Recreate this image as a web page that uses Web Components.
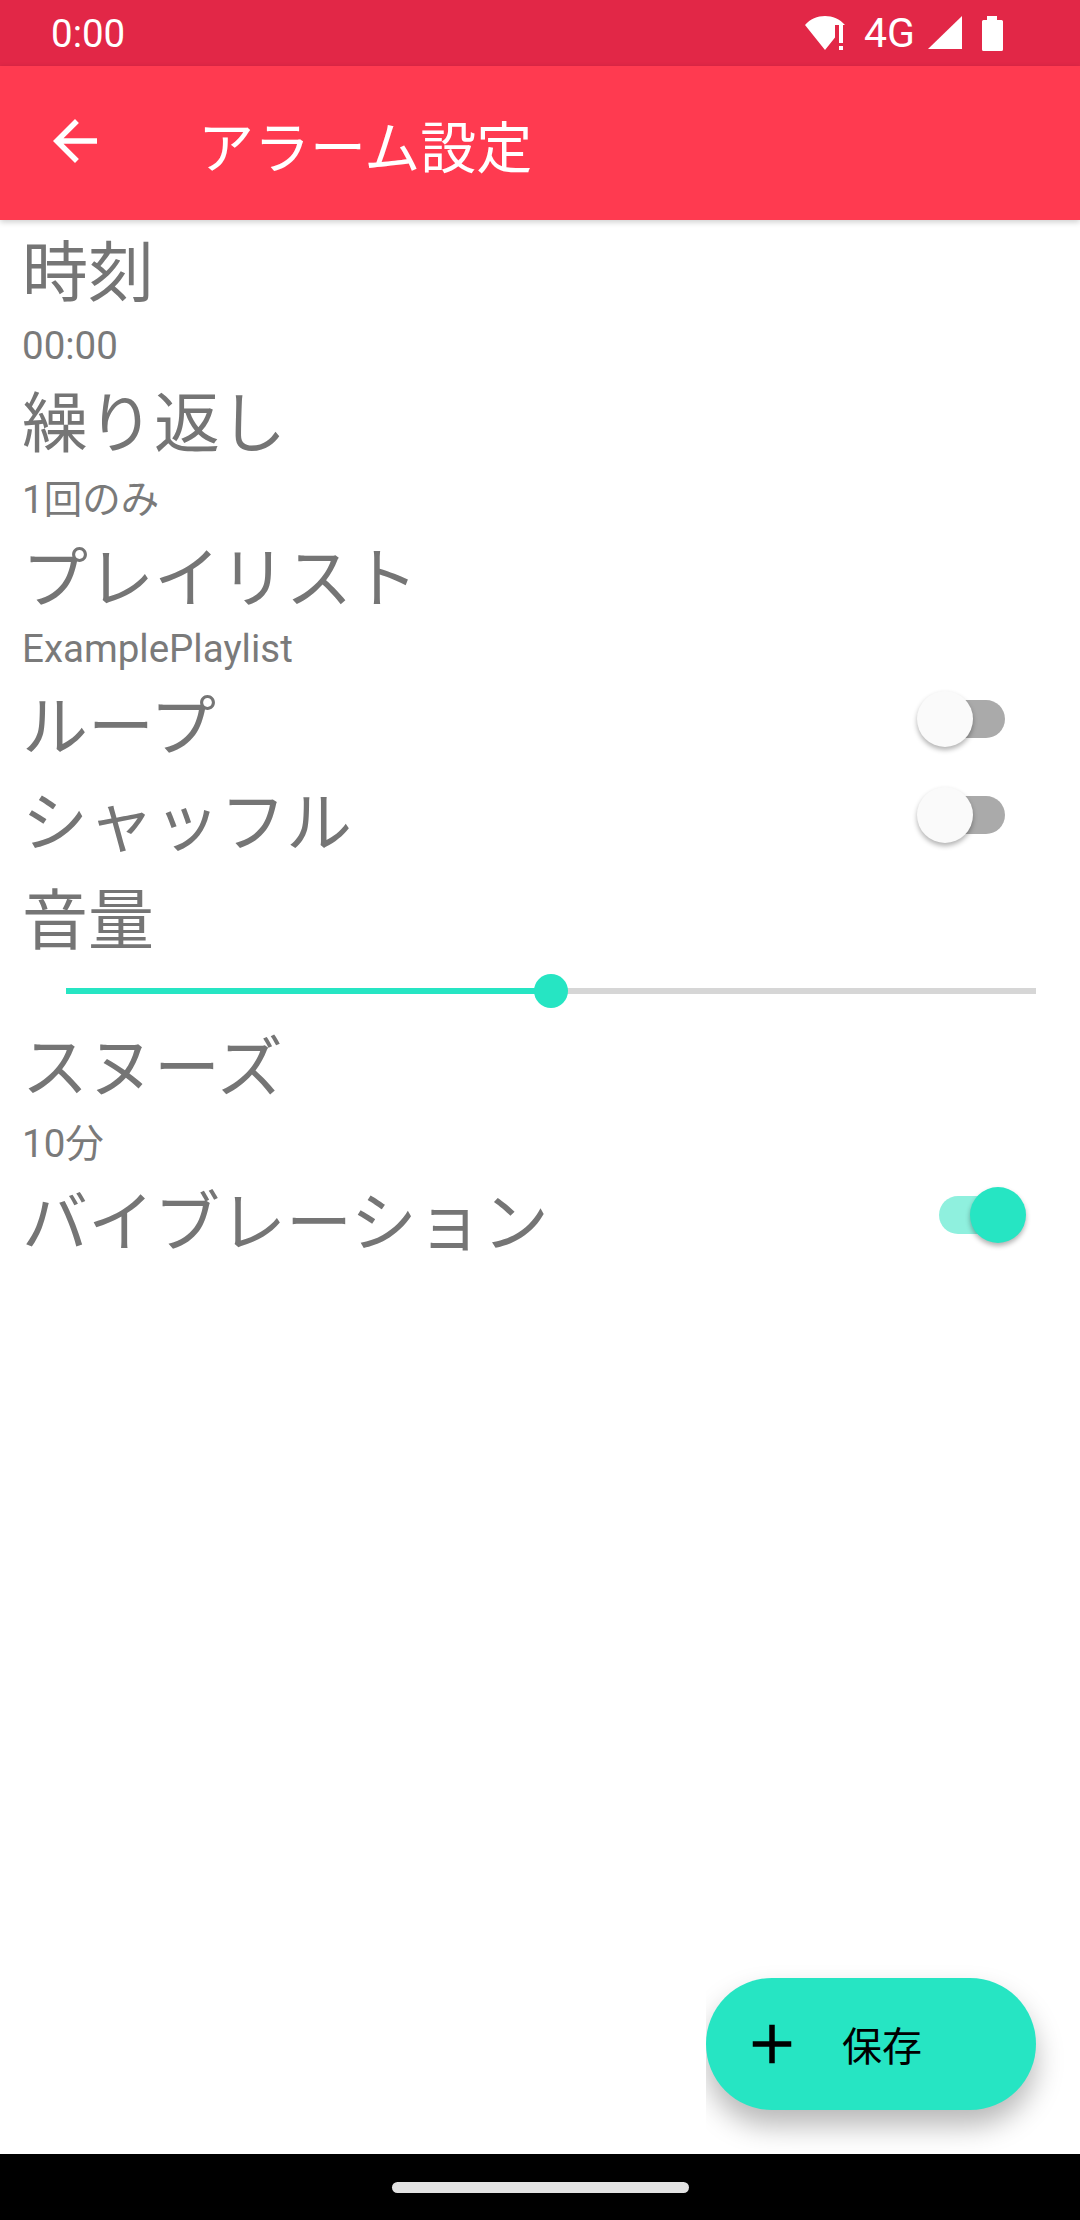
<!DOCTYPE html>
<html lang="ja">
<head>
<meta charset="utf-8">
<title>アラーム設定</title>
<style>
	html, body {
		margin: 0;
		background: #fff;
	}
</style>
</head>
<body>
<alarm-screen>
	<setting-row sub="00:00" style="--shift: 6px">時刻</setting-row>
	<setting-row sub="1回のみ" tall>繰り返し</setting-row>
	<setting-row sub="ExamplePlaylist">プレイリスト</setting-row>
	<setting-row><span>ループ</span><toggle-switch slot="end"></toggle-switch></setting-row>
	<setting-row><span>シャッフル</span><toggle-switch slot="end"></toggle-switch></setting-row>
	<setting-row style="--shift: 5px; margin-top: 6px">音量</setting-row>
	<volume-slider value="50"></volume-slider>
	<setting-row sub="10分" tall>スヌーズ</setting-row>
	<setting-row><span>バイブレーション</span><toggle-switch slot="end" checked></toggle-switch></setting-row>
</alarm-screen>

<script>
'use strict';

const sans = `Roboto, "Noto Sans CJK JP", sans-serif`;

// small helper so every element gets its own open shadow root
function define(name, html, extra) {
	class El extends HTMLElement {
		constructor() {
			super();
			this.attachShadow({mode: 'open'}).innerHTML = html;
			if (extra) extra(this);
		}
	}
	customElements.define(name, El);
}

// top bar with clock and the system icons

define('status-bar', `
	<style>
		:host {
			display: flex;
			align-items: center;
			box-sizing: border-box;
			height: 66px;
			padding: 0 77px 0 51px;
			background: #e22747;
			color: #fff;
			font: 400 38.5px ${sans};
		}
		.time { margin-right: auto; }
		svg { display: block; fill: #fff; }
		.net { margin: 0 13px 0 19px; font-size: 41px; }
	</style>
	<span class="time">0:00</span>
	<svg width="40" height="35" viewBox="0 0 40 35">
		<path d="M0 9C10-3 30-3 40 9H30V21.5L20 34Z"/>
		<rect x="34" y="9" width="4" height="18"/>
		<rect x="34" y="30" width="4" height="4"/>
	</svg>
	<span class="net">4G</span>
	<svg width="34" height="34" viewBox="0 0 34 34" style="margin-right:20px"><path d="M0 33L34 0V33Z"/></svg>
	<svg width="21" height="35" viewBox="0 0 21 35">
		<path d="M5 4V0H15V4H19.5Q21 4 21 5.500V33.500Q21 35 19.500 35H1.500Q0 35 0 33.500V5.500Q0 4 1.500 4Z"/>
	</svg>
`);

// toolbar with back arrow and screen title

define('app-bar', `
	<style>
		:host {
			display: flex;
			align-items: center;
			box-sizing: border-box;
			height: 154px;
			padding-left: 42px;
			background: #ff3a50;
			color: #fff;
			font: 400 56px ${sans};
			box-shadow: 0 2px 6px rgba(0, 0, 0, .2);
			position: relative;
			z-index: 1;
		}
		svg { display: block; margin: -4px 90px 0 0; fill: #fff; }
		span { margin-top: 1px; }
	</style>
	<svg width="66" height="66" viewBox="0 0 24 24">
		<path d="M20 11H7.830l5.590-5.590L12 4l-8 8 8 8 1.410-1.410L7.830 13H20v-2z"/>
	</svg>
	<span><slot></slot></span>
`);

// one settings row: big title, optional small value under it, optional control on the right
// "tall" rows hold a value with kanji/kana in it, those lines come out a bit higher

define('setting-row', `
	<style>
		:host {
			display: block;
			color: #757575;
			font-family: ${sans};
		}
		.head {
			display: flex;
			align-items: center;
			justify-content: space-between;
			height: 96px;
			padding: 0 54px 0 22px;
			font-size: 66px;
		}
		.title { position: relative; top: var(--shift, 9px); line-height: 1; white-space: nowrap; }
		.sub {
			box-sizing: border-box;
			height: 52px;
			padding: 7px 0 0 22px;
			color: #7a7a7a;
			font-size: 38.5px;
			line-height: 45px;
		}
		:host([tall]) .sub {
			height: 59px;
			padding-top: 13px;
		}
		.sub:empty { display: none; }
	</style>
	<div class="head">
		<span class="title"><slot></slot></span>
		<slot name="end"></slot>
	</div>
	<div class="sub"></div>
`, el => {
	el.shadowRoot.querySelector('.sub').textContent = el.getAttribute('sub') || '';
});

define('toggle-switch', `
	<style>
		:host {
			display: block;
			position: relative;
			width: 109px;
			height: 56px;
		}
		.track {
			position: absolute;
			left: 22px;
			top: 9px;
			width: 66px;
			height: 38px;
			border-radius: 19px;
			background: #aaa;
		}
		.thumb {
			position: absolute;
			left: 0;
			top: 0;
			width: 56px;
			height: 56px;
			border-radius: 50%;
			background: #fafafa;
			box-shadow: 0 3px 5px rgba(0, 0, 0, .3);
		}
		:host([checked]) .track { background: #8ff0de; }
		:host([checked]) .thumb { left: 53px; background: #26e5c3; }
	</style>
	<div class="track"></div>
	<div class="thumb"></div>
`);

define('volume-slider', `
	<style>
		:host {
			display: block;
			box-sizing: border-box;
			height: 47px;
			padding: 9px 44px 4px 66px;
		}
		.track {
			position: relative;
			height: 34px;
			background: linear-gradient(#d6d6d6, #d6d6d6) center / 100% 6px no-repeat;
		}
		.fill {
			height: 6px;
			position: absolute;
			top: 14px;
			left: 0;
			background: #26e5c3;
		}
		.thumb {
			position: absolute;
			top: 0;
			width: 34px;
			height: 34px;
			margin-left: -17px;
			border-radius: 50%;
			background: #26e5c3;
		}
	</style>
	<div class="track"><div class="fill"></div><div class="thumb"></div></div>
`, el => {
	const pos = el.getAttribute('value') + '%';
	el.shadowRoot.querySelector('.fill').style.width = pos;
	el.shadowRoot.querySelector('.thumb').style.left = pos;
});

// extended FAB, the shadow is cut off on its left side in the original too

define('save-fab', `
	<style>
		:host {
			display: block;
			position: absolute;
			right: 44px;
			bottom: 44px;
			clip-path: inset(-60px -60px -60px 0);
		}
		.fab {
			display: flex;
			align-items: center;
			box-sizing: border-box;
			width: 330px;
			height: 132px;
			padding-left: 33px;
			border-radius: 66px;
			background: #26e5c3;
			color: #000;
			font: 400 40px ${sans};
			box-shadow: 0 16px 28px rgba(0, 0, 0, .28);
		}
		svg { display: block; margin-right: 37px; }
	</style>
	<div class="fab">
		<svg width="66" height="66" viewBox="0 0 24 24"><path d="M19 13h-6v6h-2v-6H5v-2h6V5h2v6h6v2z"/></svg>
		<span><slot></slot></span>
	</div>
`);

define('nav-bar', `
	<style>
		:host {
			display: flex;
			align-items: center;
			justify-content: center;
			height: 66px;
			background: #000;
			position: relative;
			z-index: 1;
		}
		div {
			width: 297px;
			height: 11px;
			border-radius: 6px;
			background: #e2e2e2;
		}
	</style>
	<div></div>
`);

define('alarm-screen', `
	<style>
		:host {
			display: flex;
			flex-direction: column;
			height: 2220px;
			overflow: hidden;
			background: #fff;
		}
		main {
			flex: 1;
			position: relative;
		}
	</style>
	<status-bar></status-bar>
	<app-bar>アラーム設定</app-bar>
	<main>
		<slot></slot>
		<save-fab>保存</save-fab>
	</main>
	<nav-bar></nav-bar>
`);
</script>
</body>
</html>
